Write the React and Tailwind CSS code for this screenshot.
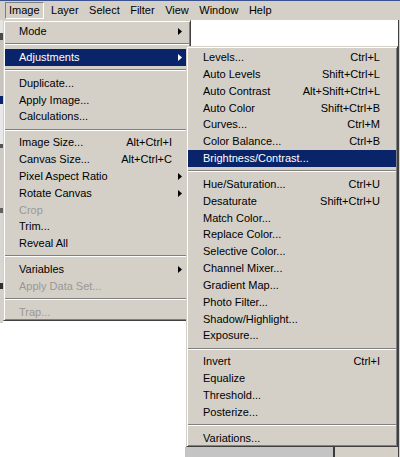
import React from "react";

const mainItems = [
  { label: "Mode", arrow: true },
  "sep",
  { label: "Adjustments", arrow: true, active: true },
  "sep",
  { label: "Duplicate..." },
  { label: "Apply Image..." },
  { label: "Calculations..." },
  "sep",
  { label: "Image Size...", sc: "Alt+Ctrl+I" },
  { label: "Canvas Size...", sc: "Alt+Ctrl+C" },
  { label: "Pixel Aspect Ratio", arrow: true },
  { label: "Rotate Canvas", arrow: true },
  { label: "Crop", disabled: true },
  { label: "Trim..." },
  { label: "Reveal All" },
  "sep",
  { label: "Variables", arrow: true },
  { label: "Apply Data Set...", disabled: true },
  "sep",
  { label: "Trap...", disabled: true },
];

const subItems = [
  { label: "Levels...", sc: "Ctrl+L" },
  { label: "Auto Levels", sc: "Shift+Ctrl+L" },
  { label: "Auto Contrast", sc: "Alt+Shift+Ctrl+L" },
  { label: "Auto Color", sc: "Shift+Ctrl+B" },
  { label: "Curves...", sc: "Ctrl+M" },
  { label: "Color Balance...", sc: "Ctrl+B" },
  { label: "Brightness/Contrast...", active: true },
  "sep",
  { label: "Hue/Saturation...", sc: "Ctrl+U" },
  { label: "Desaturate", sc: "Shift+Ctrl+U" },
  { label: "Match Color..." },
  { label: "Replace Color..." },
  { label: "Selective Color..." },
  { label: "Channel Mixer..." },
  { label: "Gradient Map..." },
  { label: "Photo Filter..." },
  { label: "Shadow/Highlight..." },
  { label: "Exposure..." },
  "sep",
  { label: "Invert", sc: "Ctrl+I" },
  { label: "Equalize" },
  { label: "Threshold..." },
  { label: "Posterize..." },
  "sep",
  { label: "Variations..." },
];

function Arrow({ white }) {
  return (
    <svg width="4" height="7" viewBox="0 0 4 7" className="block">
      <polygon points="0,0 4,3.5 0,7" fill={white ? "#ffffff" : "#000000"} />
    </svg>
  );
}

function Sep() {
  return (
    <div className="flex h-[9px] flex-col justify-center">
      <div className="h-[2px] border-t border-b border-t-[#808080] border-b-white" />
    </div>
  );
}

function Row({ item, pl, cell }) {
  const color = item.active
    ? "bg-[#0a246a] text-white"
    : item.disabled
    ? "text-[#9a9894]"
    : "text-black";
  return (
    <div className={`flex h-[16.83px] items-center ${pl} ${color}`}>
      <span className="flex-1 whitespace-nowrap">{item.label}</span>
      {item.sc && <span className="whitespace-nowrap">{item.sc}</span>}
      <div className={`flex h-full items-center ${cell}`}>
        {item.arrow && (
          <div className="ml-[6px]">
            <Arrow white={item.active} />
          </div>
        )}
      </div>
    </div>
  );
}

const bevel =
  "border border-t-[#d4d0c8] border-l-[#d4d0c8] border-r-[#404040] border-b-[#404040] bg-[#d4d0c8] px-[1px] pt-[2px] pb-0 shadow-[inset_1px_1px_0_#ffffff,inset_-1px_-1px_0_#808080]";

export default function App() {
  const menuBar = ["Image", "Layer", "Select", "Filter", "View", "Window", "Help"];
  return (
    <div className="h-[457px] w-[400px] overflow-hidden bg-white font-['Liberation_Sans',Arial,sans-serif] text-[11px] text-black">
      <div className="h-[1px] bg-[#3a5290]" />
      <div className="flex h-[19px] items-center gap-[4.5px] bg-[#d4d0c8] pl-[5px]">
        {menuBar.map((m, i) => (
          <div
            key={m}
            className={`flex h-[17px] items-center px-[3px] ${
              i === 0
                ? "border border-t-[#808080] border-l-[#808080] border-r-white border-b-white px-[2px]"
                : ""
            }`}
          >
            {m}
          </div>
        ))}
      </div>
      <div className="relative flex h-[437px]">
        <div className="flex w-[3px] flex-col">
          <div className="h-[13px] bg-[#e6e4e0]" />
          <div className="h-[7px] bg-[#4a4a4a]" />
          <div className="h-[56px] bg-[#c8c4bc]" />
          <div className="h-[8px] bg-[#0a246a]" />
          <div className="h-[40px] bg-[#e8e8e8]" />
          <div className="h-[4px] bg-[#555555]" />
          <div className="h-[60px] bg-[#cfcbc3]" />
          <div className="h-[5px] bg-[#606060]" />
          <div className="h-[70px] bg-[#d8d6d0]" />
          <div className="h-[6px] bg-[#303030]" />
          <div className="h-[34px] bg-[#d4d0c8]" />
        </div>
        <div className="flex flex-1 flex-col">
          <div className="flex-1 bg-white" />
          <div className="flex h-[10px]">
            <div className="w-[182px] bg-white" />
            <div className="w-[150px] border-r-2 border-r-[#3a3a3a] bg-[#c4c4c4]" />
            <div className="flex-1 bg-[#d4d0c8]" />
          </div>
        </div>
        <div className="w-[2px] border-l border-l-[#404040] bg-[#d4d0c8]" />

        <div className={`absolute left-[3px] top-0 w-[188px] ${bevel}`}>
          {mainItems.map((it, i) =>
            it === "sep" ? (
              <Sep key={i} />
            ) : (
              <Row key={i} item={it} pl="pl-[14px]" cell="w-[17px]" />
            )
          )}
        </div>

        <div className={`absolute left-[186px] top-[26px] w-[212px] ${bevel}`}>
          {subItems.map((it, i) =>
            it === "sep" ? (
              <Sep key={i} />
            ) : (
              <Row key={i} item={it} pl="pl-[15px]" cell="w-[16px]" />
            )
          )}
        </div>
      </div>
    </div>
  );
}
